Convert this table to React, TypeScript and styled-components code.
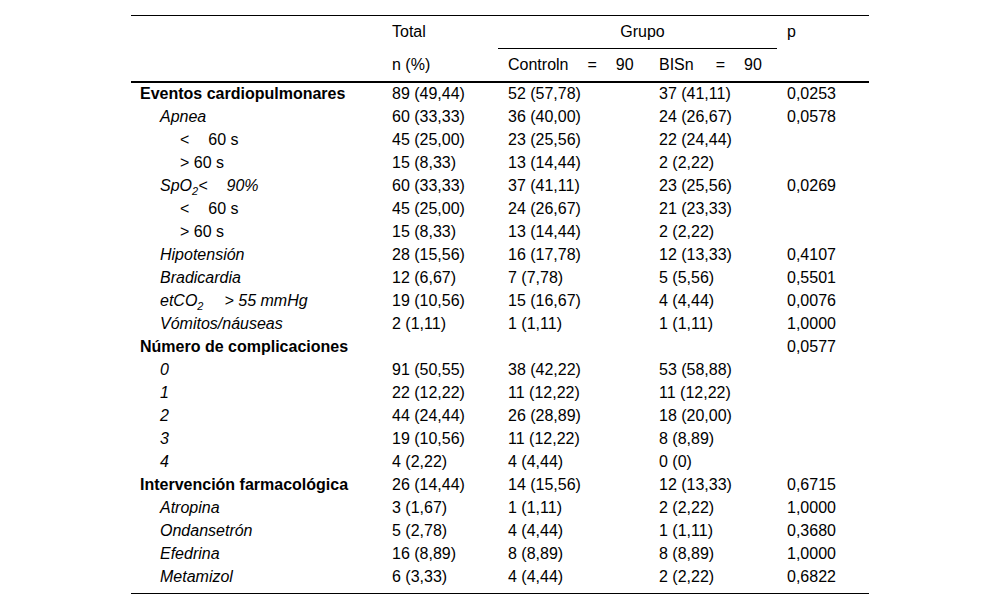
import React from "react";
import styled, { createGlobalStyle } from "styled-components";

const Global = createGlobalStyle`
  html, body { margin: 0; padding: 0; background: #fff; }
  body { font-family: "Liberation Sans", Arial, sans-serif; color: #000; }
`;

const Page = styled.div`
  padding: 15px 0 0 131px;
`;

const Table = styled.table`
  border-collapse: collapse;
  width: 738px;
  table-layout: fixed;
  font-size: 16px;
  border-top: 1px solid #000;
  border-bottom: 1px solid #000;
`;

const HeadCell = styled.th<{ $center?: boolean; $rule?: boolean }>`
  font-weight: normal;
  text-align: ${(p) => (p.$center ? "center" : "left")};
  padding: 0 0 0 10px;
  height: 32px;
  vertical-align: middle;
  white-space: nowrap;
  ${(p) => (p.$rule ? "border-bottom: 1px solid #000;" : "")}
`;

const HeadRow = styled.tr<{ $last?: boolean }>`
  ${(p) => (p.$last ? "border-bottom: 2px solid #000;" : "")}
`;

const Row = styled.tr<{ $last?: boolean }>`
  height: ${(p) => (p.$last ? "28px" : "23px")};
  td { vertical-align: ${(p) => (p.$last ? "top" : "middle")}; padding-top: ${(p) => (p.$last ? "3px" : "0")}; }
`;

const Cell = styled.td`
  padding: 0 0 0 10px;
  white-space: nowrap;
`;

const Label = styled.td<{ $level: number; $bold?: boolean; $italic?: boolean }>`
  padding: 0 0 0 ${(p) => 9 + p.$level * 20}px;
  font-weight: ${(p) => (p.$bold ? "bold" : "normal")};
  font-style: ${(p) => (p.$italic ? "italic" : "normal")};
  white-space: nowrap;
`;

const Gap = styled.span<{ $w: number }>`
  display: inline-block;
  width: ${(p) => p.$w}px;
`;

const Sub = styled.sub`
  font-size: 11px;
  vertical-align: -4px;
  line-height: 0;
`;

type R = {
  label: React.ReactNode;
  level: number;
  bold?: boolean;
  italic?: boolean;
  v: [string, string, string, string];
};

const rows: R[] = [
  { label: "Eventos cardiopulmonares", level: 0, bold: true, v: ["89 (49,44)", "52 (57,78)", "37 (41,11)", "0,0253"] },
  { label: "Apnea", level: 1, italic: true, v: ["60 (33,33)", "36 (40,00)", "24 (26,67)", "0,0578"] },
  { label: <>&lt;<Gap $w={19} />60 s</>, level: 2, v: ["45 (25,00)", "23 (25,56)", "22 (24,44)", ""] },
  { label: "> 60 s", level: 2, v: ["15 (8,33)", "13 (14,44)", "2 (2,22)", ""] },
  { label: <>SpO<Sub>2</Sub>&lt;<Gap $w={19} />90%</>, level: 1, italic: true, v: ["60 (33,33)", "37 (41,11)", "23 (25,56)", "0,0269"] },
  { label: <>&lt;<Gap $w={19} />60 s</>, level: 2, v: ["45 (25,00)", "24 (26,67)", "21 (23,33)", ""] },
  { label: "> 60 s", level: 2, v: ["15 (8,33)", "13 (14,44)", "2 (2,22)", ""] },
  { label: "Hipotensión", level: 1, italic: true, v: ["28 (15,56)", "16 (17,78)", "12 (13,33)", "0,4107"] },
  { label: "Bradicardia", level: 1, italic: true, v: ["12 (6,67)", "7 (7,78)", "5 (5,56)", "0,5501"] },
  { label: <>etCO<Sub>2</Sub><Gap $w={21} />&gt; 55 mmHg</>, level: 1, italic: true, v: ["19 (10,56)", "15 (16,67)", "4 (4,44)", "0,0076"] },
  { label: "Vómitos/náuseas", level: 1, italic: true, v: ["2 (1,11)", "1 (1,11)", "1 (1,11)", "1,0000"] },
  { label: "Número de complicaciones", level: 0, bold: true, v: ["", "", "", "0,0577"] },
  { label: "0", level: 1, italic: true, v: ["91 (50,55)", "38 (42,22)", "53 (58,88)", ""] },
  { label: "1", level: 1, italic: true, v: ["22 (12,22)", "11 (12,22)", "11 (12,22)", ""] },
  { label: "2", level: 1, italic: true, v: ["44 (24,44)", "26 (28,89)", "18 (20,00)", ""] },
  { label: "3", level: 1, italic: true, v: ["19 (10,56)", "11 (12,22)", "8 (8,89)", ""] },
  { label: "4", level: 1, italic: true, v: ["4 (2,22)", "4 (4,44)", "0 (0)", ""] },
  { label: "Intervención farmacológica", level: 0, bold: true, v: ["26 (14,44)", "14 (15,56)", "12 (13,33)", "0,6715"] },
  { label: "Atropina", level: 1, italic: true, v: ["3 (1,67)", "1 (1,11)", "2 (2,22)", "1,0000"] },
  { label: "Ondansetrón", level: 1, italic: true, v: ["5 (2,78)", "4 (4,44)", "1 (1,11)", "0,3680"] },
  { label: "Efedrina", level: 1, italic: true, v: ["16 (8,89)", "8 (8,89)", "8 (8,89)", "1,0000"] },
  { label: "Metamizol", level: 1, italic: true, v: ["6 (3,33)", "4 (4,44)", "2 (2,22)", "0,6822"] },
];

export default function App() {
  return (
    <>
      <Global />
      <Page>
        <Table>
          <colgroup>
            <col style={{ width: 251 }} />
            <col style={{ width: 116 }} />
            <col style={{ width: 151 }} />
            <col style={{ width: 128 }} />
            <col style={{ width: 92 }} />
          </colgroup>
          <thead>
            <tr>
              <HeadCell rowSpan={2} />
              <HeadCell>Total</HeadCell>
              <HeadCell colSpan={2} $center $rule>Grupo</HeadCell>
              <HeadCell>p</HeadCell>
            </tr>
            <HeadRow $last>
              <HeadCell>n (%)</HeadCell>
              <HeadCell>Controln<Gap $w={19} />=<Gap $w={19} />90</HeadCell>
              <HeadCell>BISn<Gap $w={22} />=<Gap $w={19} />90</HeadCell>
              <HeadCell />
            </HeadRow>
          </thead>
          <tbody>
            {rows.map((r, i) => (
              <Row key={i} $last={i === rows.length - 1}>
                <Label $level={r.level} $bold={r.bold} $italic={r.italic}>{r.label}</Label>
                {r.v.map((c, j) => (
                  <Cell key={j}>{c}</Cell>
                ))}
              </Row>
            ))}
          </tbody>
        </Table>
      </Page>
    </>
  );
}
